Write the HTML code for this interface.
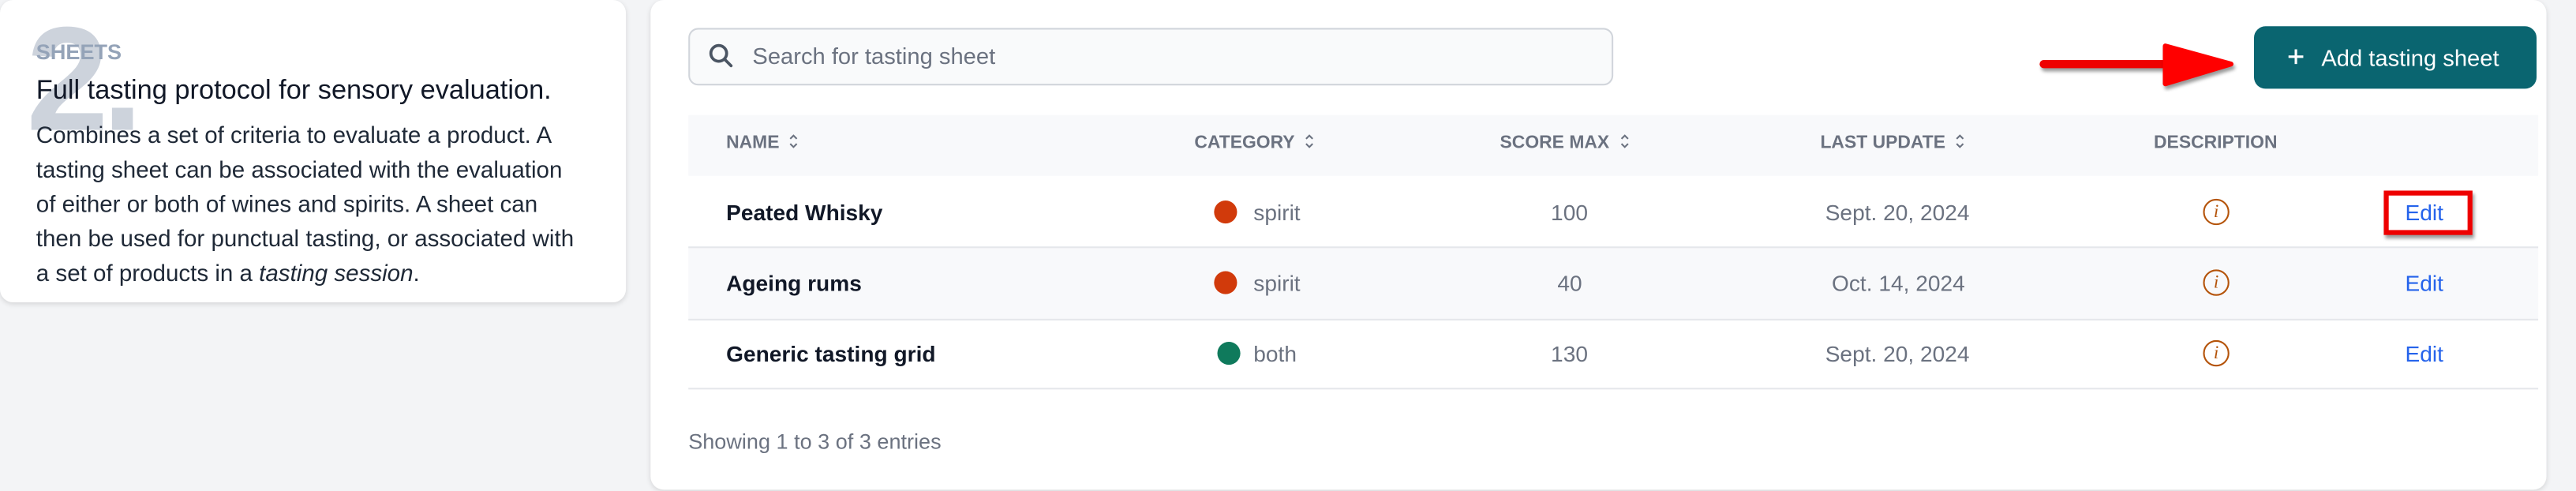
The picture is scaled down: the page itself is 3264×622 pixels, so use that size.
<!DOCTYPE html>
<html><head><meta charset="utf-8"><style>
html,body{margin:0;padding:0;width:3264px;height:622px;overflow:hidden;background:#f3f4f6;}
#w{position:absolute;left:0;top:0;width:1568px;height:299px;transform:scale(2.08163);transform-origin:0 0;font-family:"Liberation Sans",sans-serif;color:#111827;}
.a{position:absolute;white-space:nowrap;}
.card{position:absolute;background:#fff;border-radius:8px;box-shadow:0 1px 3px rgba(0,0,0,.12);}
.th{position:absolute;top:81px;font-size:11px;font-weight:bold;color:#6b7280;}
.sort{display:inline-block;margin-left:6px;vertical-align:-1px;}
.nm{font-size:13.5px;font-weight:bold;color:#111827;left:442px;}
.g{font-size:13.5px;color:#6b7280;}
.dot{position:absolute;width:14px;height:14px;border-radius:50%;}
.ed{font-size:13.5px;color:#2563eb;}
.info{position:absolute;width:16px;height:16px;border:1.3px solid #b45309;border-radius:50%;box-sizing:border-box;color:#b45309;font-size:11px;font-style:italic;text-align:center;line-height:14px;font-family:"Liberation Serif",serif;}
</style></head><body><div id="w">
<div class="card" style="left:0;top:0;width:381px;height:184px;"></div>
<div class="a" style="left:16px;top:4px;font-size:90px;font-weight:bold;color:#cdd3dc;line-height:90px;letter-spacing:-4px;">2.</div>
<div class="a" style="left:22px;top:24px;font-size:13px;font-weight:bold;color:#94a3b8;">SHEETS</div>
<div class="a" style="left:22px;top:46px;font-size:16.5px;color:#111827;">Full tasting protocol for sensory evaluation.</div>
<div class="a" style="left:22px;top:73px;font-size:14.2px;line-height:21px;color:#1f2937;">Combines a set of criteria to evaluate a product. A<br>tasting sheet can be associated with the evaluation<br>of either or both of wines and spirits. A sheet can<br>then be used for punctual tasting, or associated with<br>a set of products in a <i>tasting session</i>.</div>

<div class="card" style="left:396px;top:0;width:1154px;height:298px;"></div>
<div class="a" style="left:419px;top:17px;width:561px;height:33px;border:1px solid #d1d5db;border-radius:6px;background:#f9fafb;"></div>
<svg class="a" style="left:431px;top:26px" width="16" height="16" viewBox="0 0 16 16"><circle cx="6.5" cy="6.5" r="4.8" fill="none" stroke="#4b5563" stroke-width="1.8"/><path d="M10 10l4 4" stroke="#4b5563" stroke-width="1.8" stroke-linecap="round"/></svg>
<div class="a" style="left:458px;top:26px;font-size:14px;color:#6b7280;">Search for tasting sheet</div>

<svg class="a" style="left:1238px;top:24px" width="130" height="32" viewBox="0 0 130 32"><path d="M6 15H80" stroke="#e00" stroke-width="5" stroke-linecap="round" filter="drop-shadow(1px 2px 1px rgba(0,0,0,.4))"/><path d="M80 4L120 15L80 27Z" fill="#f00" stroke="#f00" stroke-width="3" stroke-linejoin="round" filter="drop-shadow(1px 2px 1px rgba(0,0,0,.4))"/></svg>
<div class="a" style="left:1372px;top:16px;width:172px;height:38px;background:#0a6570;border-radius:7px;"></div>
<svg class="a" style="left:1392px;top:29px" width="11" height="11" viewBox="0 0 11 11"><path d="M5.5 1v9M1 5.5h9" stroke="#fff" stroke-width="1.5"/></svg>
<div class="a" style="left:1413px;top:27px;font-size:14px;color:#fff;">Add tasting sheet</div>

<div class="a" style="left:419px;top:70px;width:1126px;height:37px;background:#f8f9fb;"></div>
<div class="th" style="left:442px">NAME<svg class="sort" width="6" height="10" viewBox="0 0 6 10"><path d="M1 3.5L3 1.5L5 3.5M1 6.5L3 8.5L5 6.5" fill="none" stroke="#6b7280" stroke-width="1"/></svg></div>
<div class="th" style="left:727px">CATEGORY<svg class="sort" width="6" height="10" viewBox="0 0 6 10"><path d="M1 3.5L3 1.5L5 3.5M1 6.5L3 8.5L5 6.5" fill="none" stroke="#6b7280" stroke-width="1"/></svg></div>
<div class="th" style="left:913px">SCORE MAX<svg class="sort" width="6" height="10" viewBox="0 0 6 10"><path d="M1 3.5L3 1.5L5 3.5M1 6.5L3 8.5L5 6.5" fill="none" stroke="#6b7280" stroke-width="1"/></svg></div>
<div class="th" style="left:1108px">LAST UPDATE<svg class="sort" width="6" height="10" viewBox="0 0 6 10"><path d="M1 3.5L3 1.5L5 3.5M1 6.5L3 8.5L5 6.5" fill="none" stroke="#6b7280" stroke-width="1"/></svg></div>
<div class="th" style="left:1311px">DESCRIPTION</div>

<div class="a" style="left:419px;top:150px;width:1126px;height:43px;background:#f8f9fb;border-top:1px solid #e5e7eb;border-bottom:1px solid #e5e7eb;"></div>
<div class="a" style="left:419px;top:236px;width:1126px;height:1px;background:#e5e7eb;"></div>

<div class="a nm" style="top:122px">Peated Whisky</div>
<div class="a nm" style="top:165px">Ageing rums</div>
<div class="a nm" style="top:208px">Generic tasting grid</div>

<div class="dot" style="left:739px;top:122px;background:#d13a0b"></div><div class="a g" style="left:763px;top:122px">spirit</div>
<div class="dot" style="left:739px;top:165px;background:#d13a0b"></div><div class="a g" style="left:763px;top:165px">spirit</div>
<div class="dot" style="left:741px;top:208px;background:#0f7a5c"></div><div class="a g" style="left:763px;top:208px">both</div>

<div class="a g" style="left:944px;top:122px">100</div>
<div class="a g" style="left:948px;top:165px">40</div>
<div class="a g" style="left:944px;top:208px">130</div>

<div class="a g" style="left:1111px;top:122px">Sept. 20, 2024</div>
<div class="a g" style="left:1115px;top:165px">Oct. 14, 2024</div>
<div class="a g" style="left:1111px;top:208px">Sept. 20, 2024</div>

<div class="info" style="left:1341px;top:121px">i</div>
<div class="info" style="left:1341px;top:164px">i</div>
<div class="info" style="left:1341px;top:207px">i</div>

<div class="a" style="left:1451px;top:116px;width:54px;height:27px;border:3px solid #e00;box-sizing:border-box;box-shadow:1px 2px 2px rgba(0,0,0,.4);"></div>
<div class="a ed" style="left:1464px;top:122px">Edit</div>
<div class="a ed" style="left:1464px;top:165px">Edit</div>
<div class="a ed" style="left:1464px;top:208px">Edit</div>

<div class="a" style="left:419px;top:261px;font-size:13px;color:#6b7280;">Showing 1 to 3 of 3 entries</div>
</div></body></html>
